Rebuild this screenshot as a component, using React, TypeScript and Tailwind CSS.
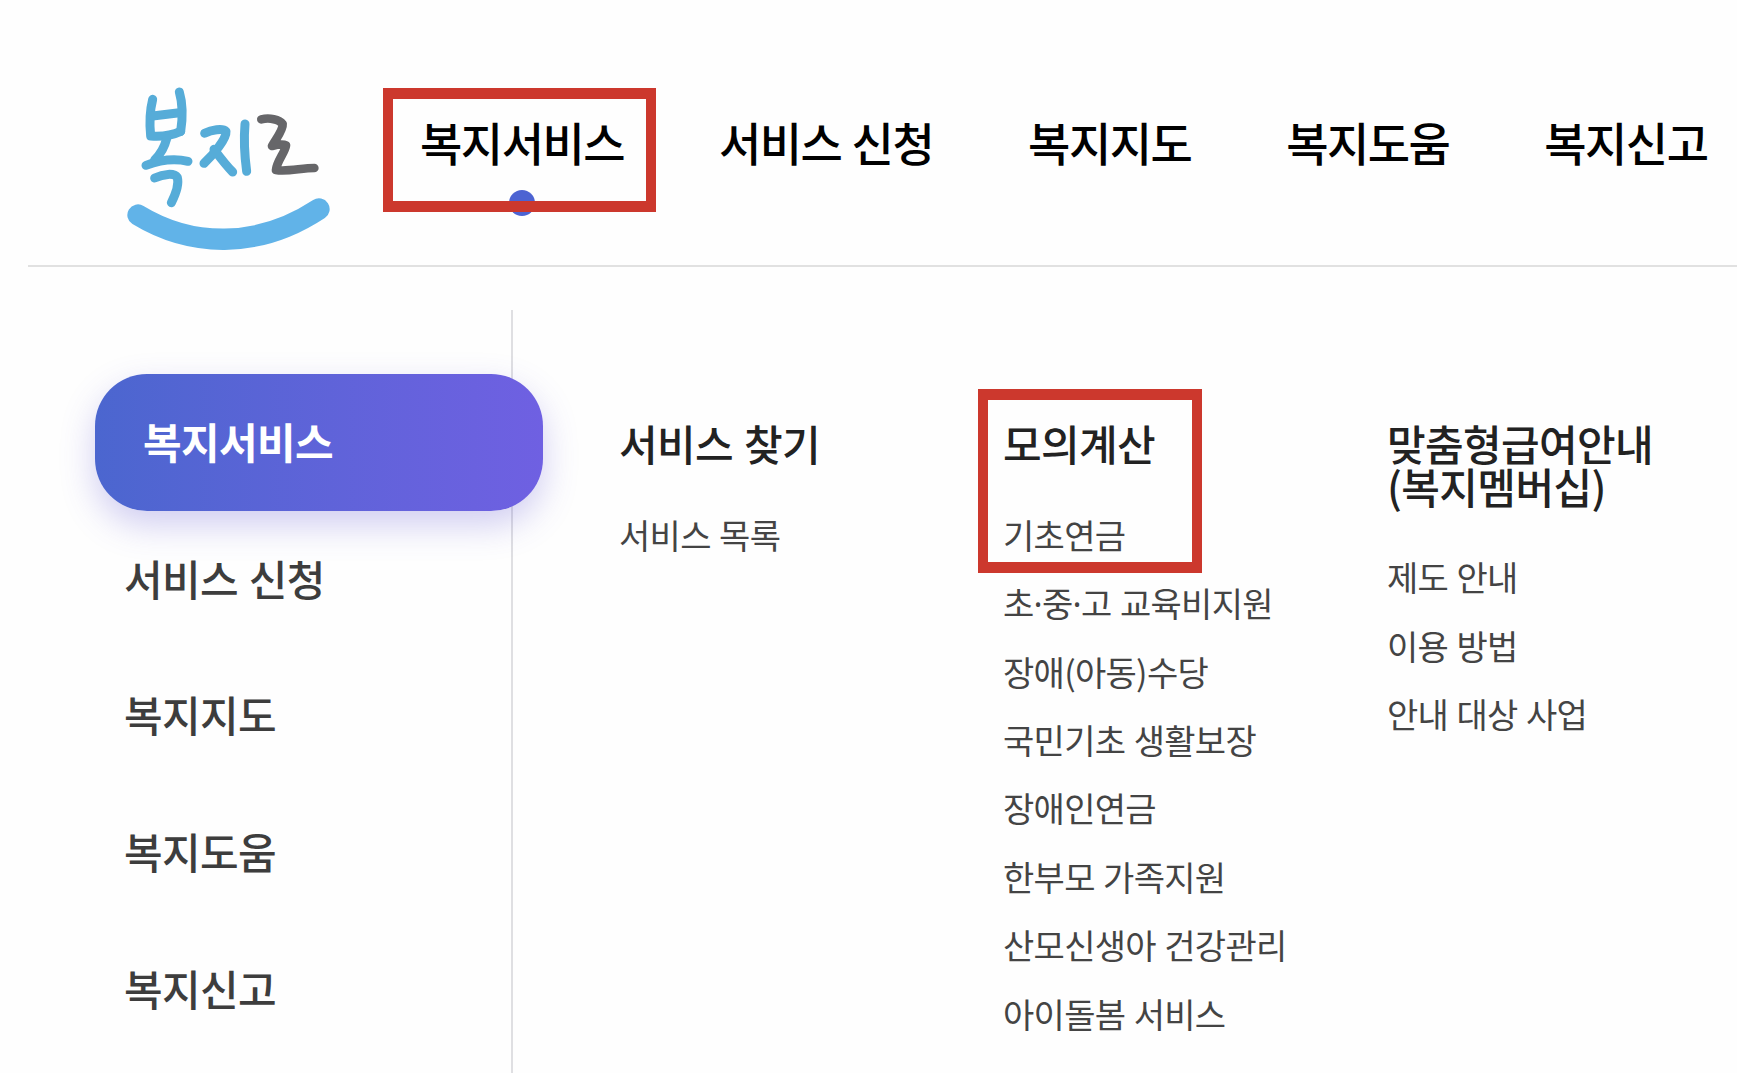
import clsx from "clsx";
import { Fragment } from "react";

const menus = ["복지서비스", "서비스 신청", "복지지도", "복지도움", "복지신고"];

const columns = [
  {
    title: ["서비스 찾기"],
    items: ["서비스 목록"],
  },
  {
    title: ["모의계산"],
    marked: true,
    items: [
      "기초연금",
      "초·중·고 교육비지원",
      "장애(아동)수당",
      "국민기초 생활보장",
      "장애인연금",
      "한부모 가족지원",
      "산모신생아 건강관리",
      "아이돌봄 서비스",
    ],
  },
  {
    title: ["맞춤형급여안내", "(복지멤버십)"],
    items: ["제도 안내", "이용 방법", "안내 대상 사업"],
  },
];

const App = () => {
  return (
    <div className="h-[1073px] w-[1737px] overflow-hidden bg-[#fefefe] font-['Noto_Sans_CJK_KR',sans-serif] whitespace-nowrap">
      <Header />
      <main className="flex h-[806px]">
        <SideMenu />
        <div className="flex pt-[155px] pl-[106px]">
          {columns.map((col) => (
            <MenuColumn key={col.title[0]} {...col} />
          ))}
        </div>
      </main>
    </div>
  );
};

const Header = () => {
  return (
    <header className="ml-[28px] h-[267px] border-b-2 border-[#e1e1e1] flex items-start">
      <Logo />
      <nav className="flex gap-[94.8px] ml-[70px] pt-[117px]">
        {menus.map((menu, i) => (
          <a
            key={menu}
            className="relative text-[46px] leading-[48px] tracking-[-1.5px] [word-spacing:1.4px] font-medium text-black"
          >
            {menu}
            {i === 0 && (
              <>
                <span className="absolute left-[89px] top-[73px] size-[26px] rounded-full bg-[#4c63d2]" />
                <span className="absolute left-[-37px] top-[-29px] h-[124px] w-[273px] border-x-10 border-y-11 border-[#cc382d]" />
              </>
            )}
          </a>
        ))}
      </nav>
    </header>
  );
};

const SideMenu = () => {
  return (
    <aside className="w-[513px] pt-[43px] shrink-0">
      <ul className="h-full pt-[64px] border-r-2 border-[#dfdfe2]">
        {menus.map((menu, i) => (
          <li
            key={menu}
            className={clsx(
              "h-[136.6px] flex items-center pb-[3px] text-[42px] tracking-[-0.64px] [word-spacing:2px]",
              i === 0
                ? "relative ml-[95px] w-[448px] pl-[48px] rounded-[52px] font-bold text-white bg-linear-to-r from-[#4b66cf] to-[#6f60e2] shadow-[0_14px_34px_rgba(90,80,210,0.28)]"
                : "pl-[124px] font-medium text-[#3d3d3d]"
            )}
          >
            {menu}
          </li>
        ))}
      </ul>
    </aside>
  );
};

type ColumnProps = {
  title: string[];
  items: string[];
  marked?: boolean;
};

const MenuColumn = ({ title, items, marked }: ColumnProps) => {
  return (
    <section className="relative w-[384px] shrink-0">
      <h2 className="text-[42px] leading-[42.7px] tracking-[-0.62px] [word-spacing:2px] font-medium text-[#222]">
        {title.map((line) => (
          <div key={line}>{line}</div>
        ))}
      </h2>
      <ul className="pt-[36px] text-[34px] leading-[68.4px] tracking-[-0.7px] [word-spacing:1.4px] text-[#444]">
        {items.map((item) => (
          <li key={item}>
            <ItemText text={item} />
          </li>
        ))}
      </ul>
      {marked && (
        <div className="absolute left-[-25px] top-[-33px] h-[184px] w-[224px] border-x-10 border-y-11 border-[#cc382d]" />
      )}
    </section>
  );
};

// the middle dot of the Korean font is too wide, take the latin one
const ItemText = ({ text }: { text: string }) => {
  return text.split("·").map((part, i) => (
    <Fragment key={i}>
      {i > 0 && <span className="font-['Noto_Sans'] leading-none">·</span>}
      {part}
    </Fragment>
  ));
};

const Logo = () => {
  return (
    <svg
      viewBox="0 0 720 600"
      className="ml-[82px] mt-[70px] h-[192px] w-[240px] shrink-0"
      preserveAspectRatio="xMinYMin slice"
      fill="none"
      strokeLinecap="round"
      strokeLinejoin="round"
    >
      <g stroke="#56acd8" strokeWidth="27">
        <path d="M128 88C120 120 118 160 122 198C150 200 182 198 212 184" />
        <path d="M208 66C218 100 218 145 212 184" />
        <path d="M128 138L208 128" />
        <path d="M170 206C164 230 152 252 134 270" />
        <path d="M108 286C150 270 190 264 234 274" />
        <path d="M134 324C160 312 192 308 202 322C208 344 196 374 184 398" />
        <path d="M284 190C304 180 338 174 348 184C350 206 310 254 282 280" />
        <path d="M312 238C330 262 348 286 368 306" />
        <path d="M405 162C401 210 404 260 410 304" />
      </g>
      <path
        d="M454 148C478 142 508 148 518 162C520 180 498 206 486 228C502 224 520 222 528 226C526 246 500 274 498 300C530 306 575 294 613 294"
        stroke="#666669"
        strokeWidth="26"
      />
      <path
        d="M84 435C240 530 440 540 627 417"
        stroke="#61b3e8"
        strokeWidth="64"
      />
    </svg>
  );
};

export default App;
